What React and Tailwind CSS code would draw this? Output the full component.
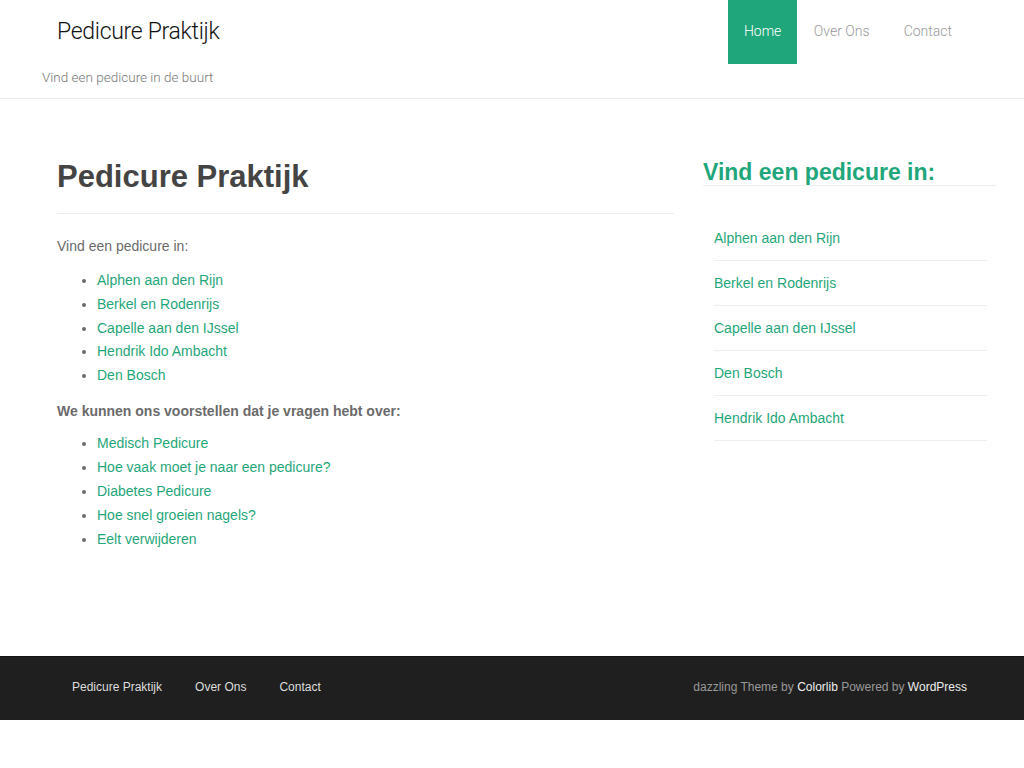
const green = 'text-[#1fa67a]';

const cities = [
  'Alphen aan den Rijn',
  'Berkel en Rodenrijs',
  'Capelle aan den IJssel',
  'Hendrik Ido Ambacht',
  'Den Bosch',
];

const topics = [
  'Medisch Pedicure',
  'Hoe vaak moet je naar een pedicure?',
  'Diabetes Pedicure',
  'Hoe snel groeien nagels?',
  'Eelt verwijderen',
];

const sidebarCities = [
  'Alphen aan den Rijn',
  'Berkel en Rodenrijs',
  'Capelle aan den IJssel',
  'Den Bosch',
  'Hendrik Ido Ambacht',
];

const App = () => {
  return (
    <div className="min-h-screen bg-white font-['Liberation_Sans',Arial,sans-serif]">
      {/* Header */}
      <header className="h-[99px] border-b border-[#ebebeb]">
        <div className="flex justify-between">
          <div className="pl-[57px]">
            <div className="h-[64px] flex items-center font-['Roboto',sans-serif] font-light text-[23px] text-[#111] tracking-[-0.3px]">
              Pedicure Praktijk
            </div>
          </div>
          <nav className="flex h-[64px] mr-[55px] font-['Roboto',sans-serif] font-light text-[14px]">
            <a className="flex items-center pb-[2px] px-[15.5px] bg-[#1fa67a] text-white">Home</a>
            <a className="flex items-center pb-[2px] px-[17px] text-[#999]">Over Ons</a>
            <a className="flex items-center pb-[2px] px-[17px] text-[#999]">Contact</a>
          </nav>
        </div>
        <p className="pl-[42px] mt-[3px] font-['Roboto',sans-serif] font-light text-[13.5px] text-[#777]">
          Vind een pedicure in de buurt
        </p>
      </header>

      {/* Content */}
      <div className="flex pt-[56px] pb-[105px]">
        <main className="ml-[57px] w-[617px] text-[14px] text-[#6b6b6b]">
          <h1 className="text-[31px] leading-[44px] font-bold text-[#444] pb-[14px] border-b border-[#eee]">
            Pedicure Praktijk
          </h1>
          <p className="mt-[22px]">Vind een pedicure in:</p>
          <ul className="mt-[12px] pl-[40px] list-disc marker:text-[#6b6b6b]">
            {cities.map((c) => (
              <li key={c} className={`leading-[23.75px] ${green}`}>{c}</li>
            ))}
          </ul>
          <p className="mt-[13px] font-bold">We kunnen ons voorstellen dat je vragen hebt over:</p>
          <ul className="mt-[9px] pl-[40px] list-disc marker:text-[#6b6b6b]">
            {topics.map((t) => (
              <li key={t} className={`leading-[24px] ${green}`}>{t}</li>
            ))}
          </ul>
        </main>

        <aside className="ml-[29px] w-[293px]">
          <h3 className={`text-[23px] leading-[25px] font-bold ${green} border-b border-[#eee] mt-[5px]`}>
            Vind een pedicure in:
          </h3>
          <ul className="mt-[30px] ml-[11px] mr-[9px] text-[14px]">
            {sidebarCities.map((c) => (
              <li key={c} className={`h-[45px] flex items-center border-b border-[#eee] ${green}`}>{c}</li>
            ))}
          </ul>
        </aside>
      </div>

      {/* Footer */}
      <footer className="h-[64px] bg-[#1f1f1f] border-t border-[#141414] flex items-center justify-between text-[12px] pb-[2px]">
        <div className="flex gap-[33px] pl-[72px] text-[#ddd]">
          <a>Pedicure Praktijk</a>
          <a>Over Ons</a>
          <a>Contact</a>
        </div>
        <div className="pr-[57px] text-[#999]">
          dazzling Theme by <a className="text-[#eee]">Colorlib</a> Powered by <a className="text-[#eee]">WordPress</a>
        </div>
      </footer>
    </div>
  );
};

export default App;
